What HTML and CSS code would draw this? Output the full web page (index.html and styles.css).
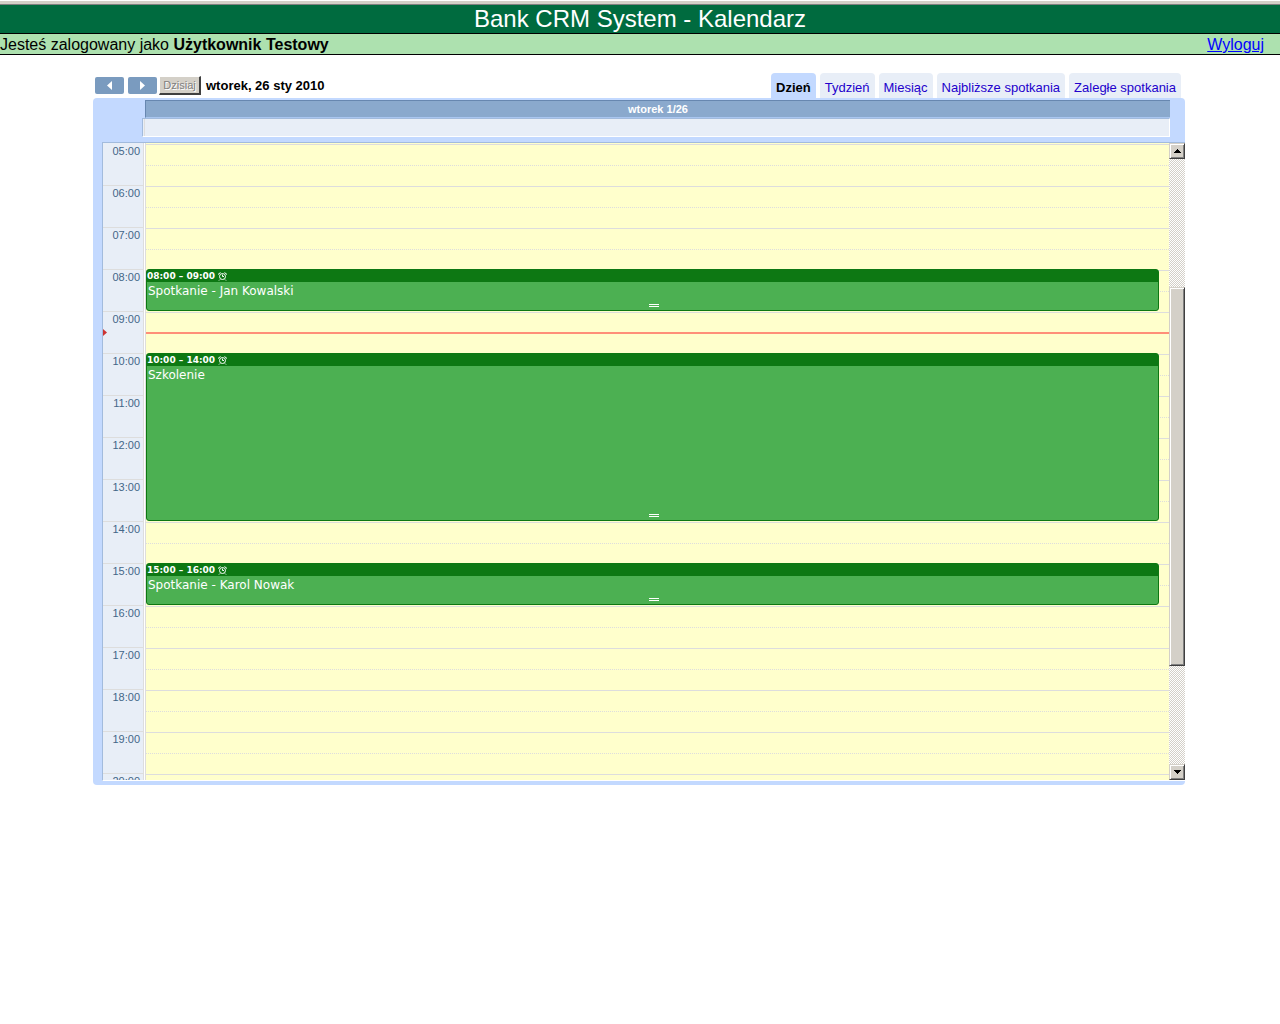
FILE: index.html
```html
<!DOCTYPE html>
<html lang="pl">
<head>
<meta charset="utf-8">
<title>Bank CRM System - Kalendarz</title>
<link rel="stylesheet" href="styles.css">
</head>
<body>
<header>
  <div class="edge"></div>
  <h1 class="title">Bank CRM System - Kalendarz</h1>
  <div class="userbar">
    <span>Jesteś zalogowany jako <b>Użytkownik Testowy</b></span>
    <a href="#logout">Wyloguj</a>
  </div>
</header>
<main class="calendar">
  <div class="toolbar">
    <div class="nav">
      <button class="arrow" type="button" aria-label="Poprzedni dzień"><svg width="5" height="9" viewBox="0 0 5 9"><path d="M5 0V9L0 4.500z" fill="#fff"/></svg></button>
      <button class="arrow" type="button" aria-label="Następny dzień"><svg width="5" height="9" viewBox="0 0 5 9"><path d="M0 0V9L5 4.500z" fill="#fff"/></svg></button>
      <button class="today" type="button" disabled>Dzisiaj</button>
      <b class="date">wtorek, 26 sty 2010</b>
    </div>
    <nav class="tabs">
      <a class="tab active" href="#day">Dzień</a>
      <a class="tab" href="#week">Tydzień</a>
      <a class="tab" href="#month">Miesiąc</a>
      <a class="tab" href="#next">Najbliższe spotkania</a>
      <a class="tab" href="#overdue">Zaległe spotkania</a>
    </nav>
  </div>
  <div class="frame">
    <div class="dayhead">wtorek 1/26</div>
    <div class="allday"></div>
    <div class="viewport">
      <div class="hours">
        <div class="hour">05:00</div>
        <div class="hour">06:00</div>
        <div class="hour">07:00</div>
        <div class="hour">08:00</div>
        <div class="hour">09:00</div>
        <div class="hour">10:00</div>
        <div class="hour">11:00</div>
        <div class="hour">12:00</div>
        <div class="hour">13:00</div>
        <div class="hour">14:00</div>
        <div class="hour">15:00</div>
        <div class="hour">16:00</div>
        <div class="hour">17:00</div>
        <div class="hour">18:00</div>
        <div class="hour">19:00</div>
        <div class="hour">20:00</div>
        <svg class="marker" style="top:186px" width="4" height="7" viewBox="0 0 4 7"><path d="M0 0L4 3.500L0 7z" fill="#c33"/></svg>
      </div>
      <div class="day">
        <div class="slot"></div><div class="slot"></div><div class="slot"></div><div class="slot"></div>
        <div class="slot"></div><div class="slot"></div><div class="slot"></div><div class="slot"></div>
        <div class="slot"></div><div class="slot"></div><div class="slot"></div><div class="slot"></div>
        <div class="slot"></div><div class="slot"></div><div class="slot"></div><div class="slot"></div>
        <div class="now" style="top:188px"></div>
        <article class="event" style="top:125px;height:42px">
          <div class="time">08:00 – 09:00 <svg class="alarm" width="9" height="9" viewBox="0 0 9 9"><use href="#alarm"/></svg></div>
          <div class="name">Spotkanie - Jan Kowalski</div>
          <div class="grip"></div>
        </article>
        <article class="event" style="top:209px;height:168px">
          <div class="time">10:00 – 14:00 <svg class="alarm" width="9" height="9" viewBox="0 0 9 9"><use href="#alarm"/></svg></div>
          <div class="name">Szkolenie</div>
          <div class="grip"></div>
        </article>
        <article class="event" style="top:419px;height:42px">
          <div class="time">15:00 – 16:00 <svg class="alarm" width="9" height="9" viewBox="0 0 9 9"><use href="#alarm"/></svg></div>
          <div class="name">Spotkanie - Karol Nowak</div>
          <div class="grip"></div>
        </article>
      </div>
      <div class="scrollbar">
        <button class="step" type="button" aria-label="W górę"><svg width="7" height="4" viewBox="0 0 7 4"><path d="M3 0h1v1h1v1h1v1h1v1H0V3h1V2h1V1h1z"/></svg></button>
        <div class="before"></div>
        <div class="thumb"></div>
        <div class="after"></div>
        <button class="step" type="button" aria-label="W dół"><svg width="7" height="4" viewBox="0 0 7 4"><path d="M0 0h7v1H6v1H5v1H4v1H3V3H2V2H1V1H0z"/></svg></button>
      </div>
    </div>
  </div>
</main>
<svg width="0" height="0" class="defs" aria-hidden="true">
  <defs>
    <g id="alarm" fill="none" stroke="#fff">
      <circle cx="4.500" cy="4.500" r="3"/>
      <path d="M0 2.500L2.500 .5M6.500 .5L9 2.500M1 8.500L2 7.500M8 8.500L7 7.500M4.500 2.500V4.500H6"/>
    </g>
  </defs>
</svg>
</body>
</html>
```
FILE: styles.css
```css
* { box-sizing: border-box; }
body {
  margin: 0;
  background: #fff;
  color: #000;
  font: 16px/20px "Liberation Sans", Arial, sans-serif;
}
button { margin: 0; padding: 0; border: 0; font: inherit; }
svg { display: block; }

.edge {
  height: 5px;
  background: #d4d0c8;
  border-top: 1px solid #fff;
  border-bottom: 1px solid #808080;
}
.title {
  margin: 0;
  background: #006b3f;
  border-bottom: 1px solid #000;
  color: #fff;
  font-size: 24px;
  font-weight: normal;
  line-height: 28px;
  text-align: center;
}
.userbar {
  display: flex;
  justify-content: space-between;
  padding: 2px 16px 0 0;
  background: #ade1af;
  border-bottom: 1px solid #000;
  line-height: 18px;
}
.userbar a { color: #00f; }

.calendar { margin: 18px 95px 0 93px; }
.toolbar {
  display: flex;
  justify-content: space-between;
  align-items: flex-start;
  padding: 0 4px 0 2px;
}
.nav { display: flex; align-items: flex-start; padding-top: 3px; }
.arrow {
  display: flex;
  align-items: center;
  justify-content: center;
  width: 29px;
  height: 17px;
  margin: 1px 4px 0 0;
  background: #7a9bbf;
  border-radius: 2px;
}
.arrow + .today { margin-left: -2px; }
.today {
  width: 42px;
  height: 19px;
  background: #d4d0c8;
  border: solid;
  border-width: 1px 2px 2px 1px;
  border-color: #fff #404040 #404040 #fff;
  color: #808080;
  font-size: 11px;
  line-height: 16px;
  text-shadow: 1px 1px #fff;
}
.date { margin-left: 5px; font-size: 13px; }
.tabs { display: flex; gap: 4px; }
.tab {
  padding: 5px 5px 0;
  height: 25px;
  background: #e8eef7;
  border-radius: 4px 4px 0 0;
  color: #20c;
  font-size: 13px;
  text-decoration: none;
}
.tab.active { background: #c3d9ff; color: #000; font-weight: bold; }

.frame {
  padding: 2px 0 4px 9px;
  background: #c3d9ff;
  border-radius: 4px;
}
.dayhead {
  margin: 0 15px 0 43px;
  height: 18px;
  background: #8aa9cd;
  border-top: 1px solid #6787b0;
  border-left: 1px solid #6787b0;
  border-bottom: 1px solid #a9c6f0;
  color: #fff;
  font-size: 11px;
  font-weight: bold;
  line-height: 16px;
  text-align: center;
}
.allday {
  margin: 0 15px 5px 40px;
  height: 19px;
  background: linear-gradient(90deg, #e8eef7 1px, #ddd 1px 2px, #e8eef7 2px);
  border: 1px solid #a2bbdd;
  border-right-color: #fff;
  border-bottom-color: #fff;
}
.viewport {
  display: flex;
  height: 639px;
  overflow: hidden;
  background: #fff;
  border-top: 1px solid #a2bbdd;
  border-left: 1px solid #a2bbdd;
  border-bottom: 1px solid #fff;
}
.hours {
  position: relative;
  flex: none;
  width: 41px;
  margin-right: 1px;
  padding-top: 1px;
  background: #e8eef7;
  border-right: 1px solid #ddd;
}
.hours, .day { height: 673px; }
.hour {
  height: 42px;
  padding-right: 3px;
  border-bottom: 1px solid #ddd;
  color: #468;
  font-size: 11px;
  line-height: 14px;
  text-align: right;
}
.marker { position: absolute; left: 0; }
.day {
  position: relative;
  flex: 1;
  border-left: 1px solid #ddd;
  background: #ffc;
  padding-top: 1px;
}
.slot {
  height: 42px;
  border-top: 1px solid #ddd;
  background: repeating-linear-gradient(90deg, #ddd 0 1px, #ffc 1px 2px) 0 20px / 100% 1px no-repeat;
}
.now {
  position: absolute;
  left: 0;
  right: 0;
  height: 2px;
  margin-top: 1px;
  background: #ff8f78;
}
.event {
  position: absolute;
  left: 0;
  right: 10px;
  margin-top: 1px;
  background: #4cb052;
  border: 1px solid #0d7813;
  border-radius: 3px;
  color: #fff;
  font-family: "DejaVu Sans", Verdana, sans-serif;
}
.time {
  display: flex;
  align-items: center;
  gap: 3px;
  height: 12px;
  background: #0d7813;
  font-size: 9px;
  font-weight: bold;
}
.name { padding: 1px 0 0 1px; font-size: 12px; line-height: 16px; }
.grip {
  position: absolute;
  bottom: 3px;
  left: 50%;
  width: 10px;
  height: 3px;
  margin-left: -4px;
  border: solid #fff;
  border-width: 1px 0;
}

.scrollbar {
  display: flex;
  flex: none;
  flex-direction: column;
  width: 16px;
  background: repeating-conic-gradient(#d4d0c8 0 25%, #fff 0 50%) 0 0 / 2px 2px;
}
.before { flex: 128; }
.thumb { flex: 379; }
.after { flex: 98; }
.step {
  display: flex;
  align-items: center;
  justify-content: center;
  height: 16px;
}
.step, .thumb {
  background: #d4d0c8;
  border: 1px solid;
  border-color: #d4d0c8 #404040 #404040 #d4d0c8;
  box-shadow: inset 1px 1px #fff, inset -1px -1px #808080;
}
.defs { position: absolute; }
```
